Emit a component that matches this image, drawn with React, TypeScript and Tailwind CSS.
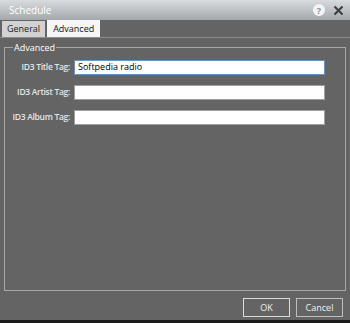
export default function App() {
  const rows = [
    { label: "ID3 Title Tag:", value: "Softpedia radio", focus: true },
    { label: "ID3 Artist Tag:", value: "", focus: false },
    { label: "ID3 Album Tag:", value: "", focus: false },
  ];

  return (
    <div className="w-[350px] h-[323px] bg-[#646464] flex flex-col font-['Open_Sans',sans-serif] text-[9px] overflow-hidden">
      {/* title bar */}
      <div className="h-[20px] shrink-0 flex items-center justify-between pl-[9px] pr-[6px] bg-gradient-to-b from-[#d9dcdf] to-[#a4a8ac]">
        <span className="text-white text-[10px]">Schedule</span>
        <div className="flex items-center gap-[8px]">
          <div className="w-[12px] h-[12px] rounded-full bg-[#f4f4f4] flex items-center justify-center text-[#8a8e92] text-[9px] font-bold leading-none">?</div>
          <svg width="11" height="11" viewBox="0 0 11 11">
            <path d="M1.5 1.5 L9.5 9.5 M9.5 1.5 L1.5 9.5" stroke="#3a3c3f" strokeWidth="2" />
          </svg>
        </div>
      </div>

      {/* tabs */}
      <div className="h-[18px] shrink-0 flex items-end gap-[2px] pl-[2px] pt-[1px] border-b border-[#8c8c8c]">
        <div className="h-[16px] px-[5px] flex items-center bg-[#d2d2d2] text-[#222]">General</div>
        <div className="h-[17px] px-[6px] flex items-center bg-[#f6f6f6] text-[#111]">Advanced</div>
      </div>

      {/* group */}
      <div className="flex-1 flex flex-col px-[4px] pt-[3px]">
        <fieldset className="h-[250px] border border-[#a8a8a8] px-[4px]">
          <legend className="ml-[4px] px-[1px] text-white text-[9px]">Advanced</legend>
          <div className="flex flex-col gap-[10px] mt-[5px]">
            {rows.map((r) => (
              <div key={r.label} className="flex items-center">
                <span className="w-[65px] whitespace-nowrap text-right text-[#e4e4e4] pr-[4px] text-[8.5px] font-semibold tracking-[-0.3px]">
                  {r.label}
                </span>
                <div
                  className={`w-[251px] h-[15px] bg-white flex items-center px-[3px] text-black ${
                    r.focus ? "border border-[#6b93c8]" : "border border-[#a0a0a0]"
                  }`}
                >
                  {r.value}
                </div>
              </div>
            ))}
          </div>
        </fieldset>

        <div className="flex justify-end gap-[6px] mt-[7px] pr-[3px]">
          <button className="w-[47px] h-[19px] border border-[#dcdcdc] text-[#f0f0f0]">OK</button>
          <button className="w-[47px] h-[19px] border border-[#bdbdbd] text-[#f0f0f0]">Cancel</button>
        </div>
      </div>
      <div className="h-[3px] shrink-0 bg-[#1a1a1a]" />
    </div>
  );
}
